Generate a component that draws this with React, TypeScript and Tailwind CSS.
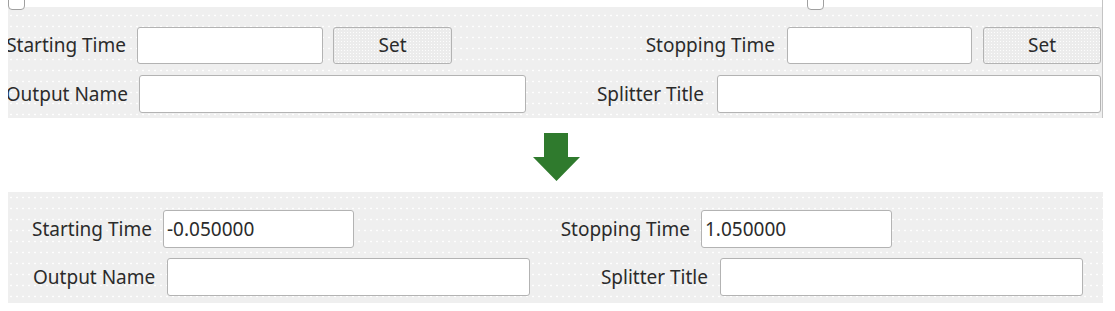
import React from "react";

const dots =
  "bg-[#efefef] bg-[radial-gradient(circle,rgba(255,255,255,0.95)_0.8px,transparent_1.2px)] bg-[length:6px_11px]";

const inputCls =
  "h-full bg-white border border-[#b3b3b3] rounded-[3px] shrink-0 flex items-center pl-[3px] text-[#2b2b2b]";

const btnCls =
  "h-full bg-[#ececec] border border-[#b3b3b3] rounded-[3px] shrink-0 flex items-center justify-center text-[#2b2b2b] bg-[radial-gradient(circle,rgba(255,255,255,0.9)_0.6px,transparent_1px)] bg-[length:3px_3px]";

function Label({ w, pr, children }: { w: string; pr: string; children: React.ReactNode }) {
  return (
    <div className={`${w} ${pr} shrink-0 flex justify-end whitespace-nowrap text-[#2b2b2b]`}>
      <span>{children}</span>
    </div>
  );
}

export default function App() {
  return (
    <div
      className="w-[1115px] h-[311px] bg-white overflow-hidden text-[19px] leading-none"
      style={{ fontFamily: '"Noto Sans", "Open Sans", sans-serif' }}
    >
      {/* Top (before) panel */}
      <div className="ml-[8px] w-[1095px] h-[118px] overflow-hidden border-r border-[#c4c4c4] flex flex-col">
        <div className="h-[10px] shrink-0 flex bg-[linear-gradient(to_bottom,#ffffff_7px,#efefef_7px)] overflow-hidden">
          <div className="w-[17px] h-[17px] -mt-[7px] ml-0 rounded-[4px] border border-[#a0a0a0] bg-white shrink-0" />
          <div className="w-[17px] h-[17px] -mt-[7px] ml-[782px] rounded-[4px] border border-[#a0a0a0] bg-white shrink-0" />
        </div>
        <div className={`flex-1 ${dots} flex flex-col pt-[17px]`}>
          <div className="flex items-center h-[37px]">
            <Label w="w-[129px]" pr="pr-[11px]">Starting Time</Label>
            <div className={`${inputCls} w-[186px]`} />
            <div className={`${btnCls} w-[119px] ml-[10px]`}>Set</div>
            <Label w="w-[335px]" pr="pr-[12px]">Stopping Time</Label>
            <div className={`${inputCls} w-[185px]`} />
            <div className={`${btnCls} w-[118px] ml-[11px]`}>Set</div>
          </div>
          <div className="flex items-center h-[38px] mt-[11px]">
            <Label w="w-[131px]" pr="pr-[11px]">Output Name</Label>
            <div className={`${inputCls} w-[387px]`} />
            <Label w="w-[191px]" pr="pr-[13px]">Splitter Title</Label>
            <div className={`${inputCls} w-[384px]`} />
          </div>
        </div>
      </div>

      {/* Arrow */}
      <div className="h-[74px] pt-[15px] pl-[533px]">
        <svg width="47" height="48" viewBox="0 0 47 48">
          <path d="M11 0 H35 V24 H47 L23.5 48 L0 24 H11 Z" fill="#2f7a2d" />
        </svg>
      </div>

      {/* Bottom (after) panel */}
      <div className={`ml-[8px] w-[1095px] h-[111px] ${dots} flex flex-col pt-[18px]`}>
        <div className="flex items-center h-[38px]">
          <div className="w-[155px] pl-[24px] shrink-0 whitespace-nowrap text-[#2b2b2b]">Starting Time</div>
          <div className={`${inputCls} w-[191px]`}>-0.050000</div>
          <Label w="w-[347px]" pr="pr-[11px]">Stopping Time</Label>
          <div className={`${inputCls} w-[191px]`}>1.050000</div>
        </div>
        <div className="flex items-center h-[38px] mt-[10px]">
          <div className="w-[159px] pl-[25px] shrink-0 whitespace-nowrap text-[#2b2b2b]">Output Name</div>
          <div className={`${inputCls} w-[363px]`} />
          <Label w="w-[190px]" pr="pr-[12px]">Splitter Title</Label>
          <div className={`${inputCls} w-[363px]`} />
        </div>
      </div>
    </div>
  );
}
